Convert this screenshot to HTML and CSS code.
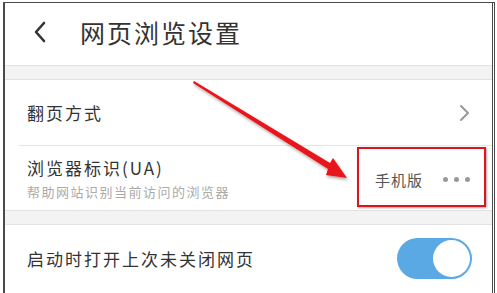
FILE: index.html
```html
<!DOCTYPE html>
<html lang="zh-CN">
<head>
    <meta charset="UTF-8">
    <meta name="viewport" content="width=device-width, initial-scale=1.0">
    <title>网页浏览设置</title>
    <link rel="stylesheet" href="styles.css">
</head>
<body>

<div class="frame">
    <div class="header">
        <svg class="back" width="14" height="22" viewBox="0 0 14 22">
            <polyline points="11,2 3,11 11,20" fill="none" stroke="#333" stroke-width="2.6" stroke-linecap="round" stroke-linejoin="round"/>
        </svg>
        <h1>网页浏览设置</h1>
    </div>

    <div class="gap"></div>

    <div class="group">
        <div class="row row-first">
            <span class="label">翻页方式</span>
            <svg class="arrow-right" width="12" height="18" viewBox="0 0 12 18">
                <polyline points="3,2 10,9 3,16" fill="none" stroke="#999" stroke-width="2" stroke-linecap="round" stroke-linejoin="round"/>
            </svg>
        </div>
        <div class="row row-ua">
            <div class="texts">
                <span class="label">浏览器标识(UA)</span>
                <span class="hint">帮助网站识别当前访问的浏览器</span>
            </div>
            <div class="value">
                <span>手机版</span>
                <span class="dots"><i></i><i></i><i></i></span>
            </div>
        </div>
    </div>

    <div class="gap"></div>

    <div class="group">
        <div class="row row-last">
            <span class="label">启动时打开上次未关闭网页</span>
            <div class="toggle"><div class="knob"></div></div>
        </div>
    </div>

    <!-- annotation -->
    <div class="mark-box"></div>
    <svg class="mark-arrow" width="497" height="293" viewBox="0 0 497 293">
        <defs>
            <filter id="sh" x="-10%" y="-10%" width="120%" height="120%">
                <feDropShadow dx="1" dy="2" stdDeviation="1.5" flood-color="#000" flood-opacity="0.35"/>
            </filter>
        </defs>
        <polygon points="193,83 194,81 330,163 333,158 347,178 326,175 328,169" fill="#e8141a" filter="url(#sh)"/>
    </svg>
</div>

</body>
</html>
```

FILE: styles.css
```css
* {
    margin: 0;
    padding: 0;
    box-sizing: border-box;
}
body {
    font-family: "Noto Sans CJK SC", "Noto Sans", sans-serif;
    background-color: #fff;
    color: #333;
    width: 497px;
    height: 293px;
    overflow: hidden;
}
.frame {
    position: relative;
    margin: 2px 0 0 3px;
    width: 492px;
    height: 300px;
    border-left: 2px solid #4a4a4a;
    border-top: 1px solid #4a4a4a;
    border-right: 3px double #4a4a4a;
    background-color: #fff;
}
.header {
    height: 62px;
    display: flex;
    align-items: center;
    padding-left: 28px;
    padding-bottom: 5px;
}
h1 {
    font-size: 25px;
    font-weight: 400;
    letter-spacing: 2px;
    color: #333;
    margin-left: 33px;
}
.gap {
    height: 15px;
    background-color: #f3f3f3;
    border-top: 1px solid #e2e2e2;
    border-bottom: 1px solid #e2e2e2;
}
.group {
    padding-left: 13px;
}
.row {
    display: flex;
    align-items: center;
    justify-content: space-between;
    padding-right: 24px;
}
.row-first {
    height: 66px;
    border-bottom: 1px solid #e6e6e6;
}
.row-ua {
    height: 64px;
    padding-right: 22px;
}
.row-last {
    height: 66px;
    padding-right: 20px;
}
.label {
    font-size: 17px;
    letter-spacing: 2px;
    color: #333;
    margin-left: 9px;
}
.texts {
    display: flex;
    flex-direction: column;
    gap: 2px;
}
.hint {
    font-size: 13px;
    letter-spacing: 1.5px;
    color: #aaa;
    margin-left: 9px;
}
.arrow-right {
    margin-right: -2px;
}
.value {
    display: flex;
    align-items: center;
    gap: 20px;
    font-size: 15px;
    letter-spacing: 1px;
    color: #555;
    margin-top: 2px;
}
.dots {
    display: flex;
    gap: 6px;
}
.dots i {
    width: 5px;
    height: 5px;
    border-radius: 50%;
    background-color: #999;
}
.toggle {
    width: 75px;
    height: 41px;
    border-radius: 21px;
    background-color: #5aa8e4;
    position: relative;
    margin-top: 1px;
}
.knob {
    position: absolute;
    right: 2px;
    top: 2px;
    width: 37px;
    height: 37px;
    border-radius: 50%;
    background-color: #fff;
}
.mark-box {
    position: absolute;
    left: 352px;
    top: 144px;
    width: 129px;
    height: 60px;
    border: 2px solid #d9161c;
    box-shadow: 1px 1px 2px rgba(0, 0, 0, 0.35);
}
.mark-arrow {
    position: absolute;
    left: -5px;
    top: -3px;
    pointer-events: none;
}
```
